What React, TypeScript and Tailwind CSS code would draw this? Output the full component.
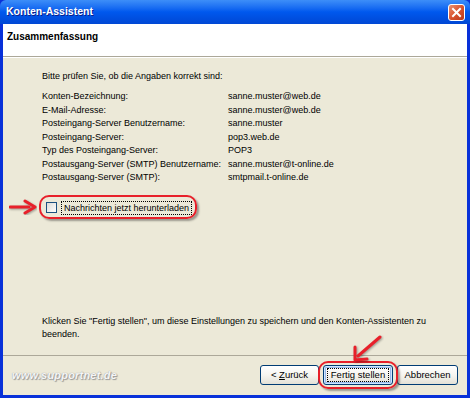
const FONT = "font-['Liberation_Sans',Arial,sans-serif]";

const SUMMARY = [
  { label: "Konten-Bezeichnung:", value: "sanne.muster@web.de" },
  { label: "E-Mail-Adresse:", value: "sanne.muster@web.de" },
  { label: "Posteingang-Server Benutzername:", value: "sanne.muster" },
  { label: "Posteingang-Server:", value: "pop3.web.de" },
  { label: "Typ des Posteingang-Server:", value: "POP3" },
  { label: "Postausgang-Server (SMTP) Benutzername:", value: "sanne.muster@t-online.de" },
  { label: "Postausgang-Server (SMTP):", value: "smtpmail.t-online.de" },
];

function XpButton({ label, width, isDefault }: { label: React.ReactNode; width: string; isDefault?: boolean }) {
  return (
    <button
      className={`${width} h-[20px] rounded-[3px] border border-[#003c74] bg-gradient-to-b from-white via-[#f6f5f0] to-[#e3e1d6] text-[9.5px] text-black flex items-center justify-center ${
        isDefault ? "shadow-[inset_0_0_0_1px_#cee7ff,inset_0_0_0_2px_#98b8ea]" : ""
      }`}
    >
      {isDefault ? (
        <span className="border border-dotted border-black px-[3px] leading-[12px]">{label}</span>
      ) : (
        label
      )}
    </button>
  );
}

export default function App() {
  return (
    <div className={`relative w-[470px] h-[398px] flex flex-col bg-[#0831d9] ${FONT} overflow-hidden`}>
      {/* Title bar */}
      <div className="h-[24px] flex items-center justify-between pl-[6px] pr-[5px] rounded-t-[6px] bg-gradient-to-b from-[#3d8ef8] via-[#0058ee] to-[#0047d4]">
        <span className="text-white font-bold text-[10.5px] [text-shadow:1px_1px_0_#0a1e8c]">Konten-Assistent</span>
        <div className="w-[17px] h-[17px] rounded-[3px] border border-white bg-gradient-to-br from-[#e8906f] via-[#d9532f] to-[#b8391c] flex items-center justify-center">
          <svg width="11" height="11" viewBox="0 0 11 11">
            <path d="M2 2 L9 9 M9 2 L2 9" stroke="white" strokeWidth="2" strokeLinecap="square" />
          </svg>
        </div>
      </div>

      {/* Window client area */}
      <div className="flex-1 flex flex-col mx-[3px] mb-[3px] bg-[#ece9d8]">
        {/* Header */}
        <div className="h-[33px] bg-white flex items-start pt-[5px] pl-[4px] border-b border-[#aca899]">
          <span className="font-bold text-[10px] text-black">Zusammenfassung</span>
        </div>
        <div className="h-px bg-white" />

        {/* Body */}
        <div className="flex-1 flex flex-col pl-[39px] pt-[12px] pb-[14px] text-[9px] text-black leading-[13px]">
          <p>Bitte prüfen Sie, ob die Angaben korrekt sind:</p>
          <div className="grid grid-cols-[186px_1fr] mt-[7px] leading-[13.5px]">
            {SUMMARY.map((row) => (
              <div key={row.label} className="contents">
                <span>{row.label}</span>
                <span>{row.value}</span>
              </div>
            ))}
          </div>

          <div className="relative mt-[16px] flex items-center gap-[4px] pl-[4px]">
            <div className="w-[11px] h-[11px] border border-[#1c5180] bg-gradient-to-br from-[#dcdcd7] to-white" />
            <span className="border border-dotted border-black px-[2px] leading-[12px]">Nachrichten jetzt herunterladen</span>
            <div className="absolute left-[-3px] top-[-6px] w-[158px] h-[24px] rounded-[10px] border-2 border-[#e8202a] shadow-[2px_2px_2px_rgba(0,0,0,0.35)]" />
          </div>

          <div className="mt-auto">
            <p>Klicken Sie "Fertig stellen", um diese Einstellungen zu speichern und den Konten-Assistenten zu</p>
            <p>beenden.</p>
          </div>
        </div>

        {/* Footer */}
        <div className="h-[40px] border-t border-[#aca899] flex items-center justify-between pl-[9px] pr-[9px] pb-[1px] relative">
          <span className="text-[11px] font-bold text-[#f6f6f6] italic tracking-[0.2px] [text-shadow:0_0_1px_#8a8a8a,1px_1px_1px_#9a9a9a]">
            www.supportnet.de
          </span>
          <div className="flex items-center gap-[4px]">
            <XpButton width="w-[59px]" label={<span>&lt; <span className="underline">Z</span>urück</span>} />
            <div className="relative">
              <XpButton width="w-[70px]" label="Fertig stellen" isDefault />
              <div className="absolute left-[-5px] top-[-4px] w-[80px] h-[28px] rounded-[10px] border-2 border-[#e8202a] shadow-[2px_2px_2px_rgba(0,0,0,0.35)]" />
            </div>
            <XpButton width="w-[61px]" label="Abbrechen" />
          </div>
        </div>
      </div>

      {/* Annotation arrows */}
      <svg className="absolute left-[9px] top-[199px]" width="28" height="16" viewBox="0 0 28 16">
        <g filter="drop-shadow(1px 1px 1px rgba(0,0,0,0.35))">
          <path d="M1 8 H20" stroke="#e8202a" strokeWidth="3" strokeLinecap="round" />
          <path d="M16 2 L26 8 L16 14" fill="none" stroke="#e8202a" strokeWidth="3" strokeLinecap="round" strokeLinejoin="round" />
        </g>
      </svg>
      <svg className="absolute left-[350px] top-[334px]" width="34" height="30" viewBox="0 0 34 30">
        <g filter="drop-shadow(1px 1px 1px rgba(0,0,0,0.35))">
          <path d="M30 3 L8 22" stroke="#e8202a" strokeWidth="3" strokeLinecap="round" />
          <path d="M5 13 L5 26 L17 25" fill="none" stroke="#e8202a" strokeWidth="3" strokeLinecap="round" strokeLinejoin="round" />
        </g>
      </svg>
    </div>
  );
}
